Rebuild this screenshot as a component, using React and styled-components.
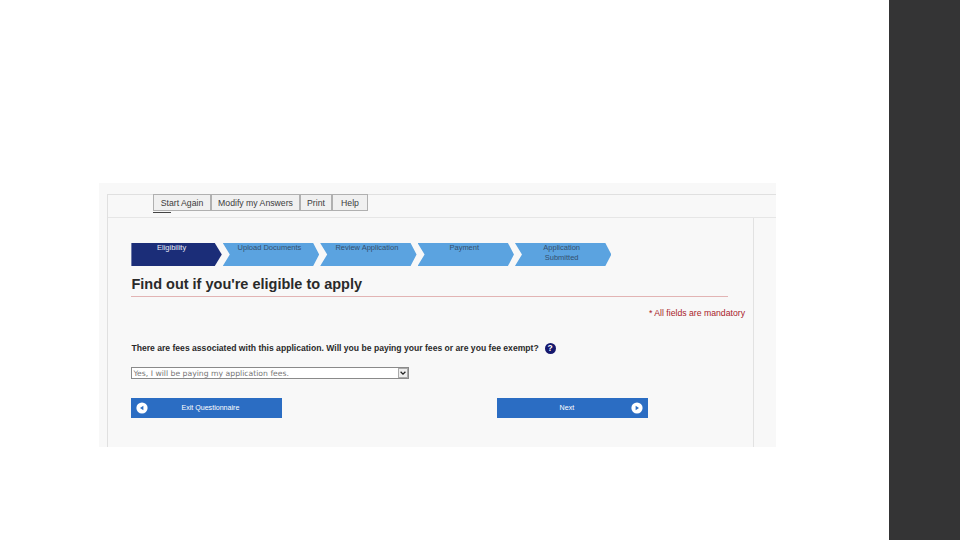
import React from 'react'
import styled, { createGlobalStyle } from 'styled-components'

const GlobalStyle = createGlobalStyle`
  html, body { margin: 0; padding: 0; background: #fff; }
  body { font-family: "Liberation Sans", Arial, sans-serif; }
`

const steps = [
  { label: 'Eligibility', active: true },
  { label: 'Upload Documents' },
  { label: 'Review Application' },
  { label: 'Payment' },
  { label: 'Application Submitted', narrow: true },
]

const toolbarItems = [
  { label: 'Start Again', width: 58, current: true },
  { label: 'Modify my Answers', width: 89 },
  { label: 'Print', width: 32 },
  { label: 'Help', width: 36 },
]

const App = () => {
  return (
    <Slide>
      <GlobalStyle />
      <Stage>
        <Panel>
          <Frame>
            <Toolbar>
              {toolbarItems.map((item) => (
                <ToolButton key={item.label} $width={item.width} $current={item.current}>
                  {item.label}
                </ToolButton>
              ))}
            </Toolbar>
            <Body>
              <Content>
                <Steps>
                  {steps.map((step, index) => (
                    <Step key={step.label} $active={step.active} $first={index === 0}>
                      <StepLabel $narrow={step.narrow}>{step.label}</StepLabel>
                    </Step>
                  ))}
                </Steps>
                <Heading>Find out if you're eligible to apply</Heading>
                <Mandatory>* All fields are mandatory</Mandatory>
                <Question>
                  There are fees associated with this application. Will you be paying your fees or are you fee exempt?
                  <HelpIcon>?</HelpIcon>
                </Question>
                <SelectWrap>
                  <FeeSelect defaultValue="yes">
                    <option value="yes">Yes, I will be paying my application fees.</option>
                  </FeeSelect>
                  <SelectArrow viewBox="0 0 10 9">
                    <path d="M2 3 L5 6 L8 3" fill="none" stroke="#222" strokeWidth="1.6" />
                  </SelectArrow>
                </SelectWrap>
                <Actions>
                  <ActionButton>
                    <ArrowIcon />
                    <ActionLabel $shift>Exit Questionnaire</ActionLabel>
                  </ActionButton>
                  <ActionButton>
                    <ActionLabel>Next</ActionLabel>
                    <ArrowIcon $forward />
                  </ActionButton>
                </Actions>
              </Content>
              <Rail />
            </Body>
          </Frame>
        </Panel>
      </Stage>
      <Sidebar />
    </Slide>
  )
}

const ArrowIcon = ({ $forward }) => (
  <IconSvg viewBox="0 0 12 12">
    <circle cx="6" cy="6" r="5.6" fill="#fff" />
    <path d={$forward ? 'M4.6 3.8 L8 6 L4.6 8.2 Z' : 'M7.4 3.8 L4 6 L7.4 8.2 Z'} fill="#2b6dc3" />
  </IconSvg>
)

export default App

const Slide = styled.div`
  width: 960px;
  height: 540px;
  display: flex;
  overflow: hidden;
  background: #fff;
`
const Stage = styled.div`
  flex: 1;
  padding: 183px 0 0 99px;
`
const Sidebar = styled.div`
  width: 71px;
  background: #343435;
`
const Panel = styled.div`
  width: 677px;
  height: 264px;
  box-sizing: border-box;
  padding: 11px 0 0 8px;
  background: #f8f8f8;
`
const Frame = styled.div`
  height: 100%;
  box-sizing: border-box;
  display: flex;
  flex-direction: column;
  border-top: 1px solid #e0e0e0;
  border-left: 1px solid #e0e0e0;
`
const Toolbar = styled.div`
  height: 23px;
  flex: none;
  margin-top: -1px;
  display: flex;
  align-items: flex-start;
  padding-left: 45px;
  border-bottom: 1px solid #e6e6e6;
`
const ToolButton = styled.div`
  position: relative;
  width: ${(p) => p.$width}px;
  height: 17px;
  box-sizing: border-box;
  display: flex;
  align-items: center;
  justify-content: center;
  border: 1px solid #b0b0b0;
  background: #f0f0f0;
  color: #3c3c3c;
  font-size: 8.7px;

  ${(p) => p.$current && `
    &::after {
      content: '';
      position: absolute;
      left: -1px;
      bottom: -3px;
      width: 18px;
      height: 1px;
      background: #444;
    }
  `}
`
const Body = styled.div`
  flex: 1;
  display: flex;
  min-height: 0;
`
const Content = styled.div`
  width: 645px;
  flex: none;
  padding: 25px 0 0 23.4px;
  box-sizing: border-box;
  display: flex;
  flex-direction: column;
`
const Rail = styled.div`
  flex: 1;
  border-left: 1px solid #e2e2e2;
`
const Steps = styled.div`
  display: flex;
  gap: 1px;
`
const Step = styled.div`
  width: ${(p) => (p.$first ? 90.4 : 96.4)}px;
  height: 23px;
  box-sizing: border-box;
  padding: 0 10px 0 ${(p) => (p.$first ? 0 : 7)}px;
  background: ${(p) => (p.$active ? '#1b2d78' : '#5ba3e0')};
  color: ${(p) => (p.$active ? '#e8ecf6' : '#34506e')};
  clip-path: ${(p) =>
    p.$first
      ? 'polygon(0 0, calc(100% - 7px) 0, 100% 50%, calc(100% - 7px) 100%, 0 100%)'
      : 'polygon(0 0, calc(100% - 6px) 0, 100% 50%, calc(100% - 6px) 100%, 0 100%, 7px 50%)'};
`
const StepLabel = styled.div`
  font-size: 7.5px;
  line-height: 10px;
  text-align: center;
  margin: 0 auto;
  ${(p) => p.$narrow && 'width: 50px;'}
`
const Heading = styled.h1`
  width: 597px;
  height: 22px;
  margin: 9px 0 0;
  box-sizing: border-box;
  border-bottom: 1px solid #e2b4b4;
  color: #2a2a2a;
  font-size: 14.5px;
  line-height: 18px;
  font-weight: bold;
`
const Mandatory = styled.div`
  margin-top: 11px;
  align-self: flex-end;
  margin-right: 8px;
  color: #a8232a;
  font-size: 8.7px;
  line-height: 11px;
`
const Question = styled.div`
  margin-top: 22px;
  display: flex;
  align-items: center;
  height: 14px;
  color: #2a2a2a;
  font-size: 8.6px;
  font-weight: bold;
  white-space: nowrap;
`
const HelpIcon = styled.span`
  margin-left: 6px;
  width: 11px;
  height: 11px;
  border-radius: 50%;
  background: #16186e;
  color: #fff;
  font-size: 8.5px;
  line-height: 11px;
  text-align: center;
`
const SelectWrap = styled.div`
  position: relative;
  margin-top: 12px;
  width: 278px;
  height: 12px;
`
const FeeSelect = styled.select`
  display: block;
  width: 100%;
  height: 100%;
  box-sizing: border-box;
  padding: 0 0 0 1px;
  appearance: none;
  border: 1px solid #8a8a8a;
  border-radius: 0;
  background: #fff;
  color: #777;
  font-family: "DejaVu Sans", sans-serif;
  font-size: 7.7px;
`
const SelectArrow = styled.svg`
  position: absolute;
  right: 1px;
  top: 1px;
  width: 10px;
  height: 10px;
  box-sizing: border-box;
  border: 1px solid #aaa;
  background: #eee;
`
const Actions = styled.div`
  margin-top: 19px;
  width: 517px;
  display: flex;
  justify-content: space-between;
`
const ActionButton = styled.div`
  width: 151px;
  height: 20px;
  box-sizing: border-box;
  padding: 0 5px;
  display: flex;
  align-items: center;
  background: #2b6dc3;
  color: #fff;
`
const ActionLabel = styled.span`
  flex: 1;
  text-align: center;
  font-size: 7.1px;
  ${(p) => p.$shift && 'padding-right: 5px;'}
`
const IconSvg = styled.svg`
  width: 12px;
  height: 12px;
  flex: none;
`
